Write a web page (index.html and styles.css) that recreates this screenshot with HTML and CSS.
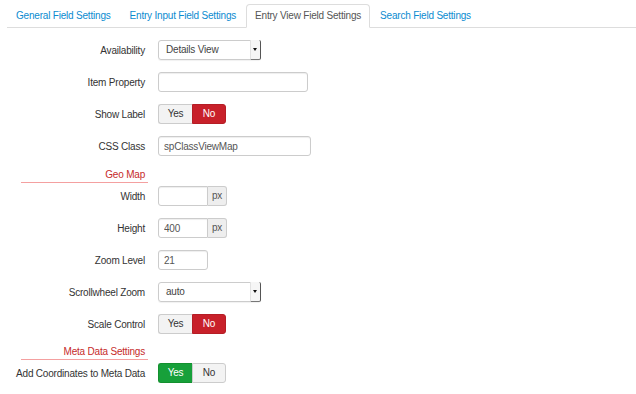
FILE: index.html
```html
<!DOCTYPE html>
<html>
<head>
    <meta charset="utf-8">
    <title>Field Settings</title>
    <link rel="stylesheet" href="styles.css">
</head>
<body>
    <ul class="nav-tabs">
        <li><a href="#">General Field Settings</a></li>
        <li><a href="#">Entry Input Field Settings</a></li>
        <li class="active"><a href="#">Entry View Field Settings</a></li>
        <li><a href="#">Search Field Settings</a></li>
    </ul>

    <form class="settings">
        <div class="row">
            <label class="label">Availability</label>
            <div class="select"><span class="value">Details View</span><span class="arrow"></span></div>
        </div>
        <div class="row">
            <label class="label">Item Property</label>
            <input class="input input-wide" type="text" value="">
        </div>
        <div class="row">
            <label class="label">Show Label</label>
            <div class="btn-group">
                <span class="btn">Yes</span>
                <span class="btn btn-danger">No</span>
            </div>
        </div>
        <div class="row">
            <label class="label">CSS Class</label>
            <input class="input input-css" type="text" value="spClassViewMap">
        </div>

        <div class="section-title geo">Geo Map</div>
        <div class="row">
            <label class="label">Width</label>
            <div class="input-append">
                <input class="input input-small" type="text" value="">
                <span class="add-on">px</span>
            </div>
        </div>
        <div class="row">
            <label class="label">Height</label>
            <div class="input-append">
                <input class="input input-small" type="text" value="400">
                <span class="add-on">px</span>
            </div>
        </div>
        <div class="row">
            <label class="label">Zoom Level</label>
            <input class="input input-small" type="text" value="21">
        </div>
        <div class="row">
            <label class="label">Scrollwheel Zoom</label>
            <div class="select"><span class="value">auto</span><span class="arrow"></span></div>
        </div>
        <div class="row">
            <label class="label">Scale Control</label>
            <div class="btn-group">
                <span class="btn">Yes</span>
                <span class="btn btn-danger">No</span>
            </div>
        </div>

        <div class="section-title meta">Meta Data Settings</div>
        <div class="row">
            <label class="label">Add Coordinates to Meta Data</label>
            <div class="btn-group">
                <span class="btn btn-success">Yes</span>
                <span class="btn">No</span>
            </div>
        </div>
    </form>
</body>
</html>
```

FILE: styles.css
```css
body {
    margin: 0;
    background: #fff;
    font-family: 'Liberation Sans', Arial, sans-serif;
    font-size: 10px;
    letter-spacing: -0.2px;
    color: #333;
}

/* tabs */
.nav-tabs {
    list-style: none;
    margin: 0 0 0 7px;
    padding: 4px 0 0 0;
    display: flex;
    border-bottom: 1px solid #ddd;
}

.nav-tabs li {
    margin: 0 1px -1px 0;
}

.nav-tabs a {
    display: block;
    height: 22px;
    line-height: 22px;
    padding: 0 8px;
    border: 1px solid transparent;
    border-radius: 4px 4px 0 0;
    color: #0a8bd0;
    text-decoration: none;
}

.nav-tabs .active a {
    color: #555;
    background: #fff;
    border-color: #ddd #ddd transparent;
}

/* form rows */
.settings {
    padding-top: 12px;
}

.row {
    display: flex;
    align-items: center;
    gap: 13px;
    height: 20px;
    margin-bottom: 12px;
}

.label {
    width: 145px;
    text-align: right;
    flex-shrink: 0;
}

.input {
    box-sizing: border-box;
    height: 20px;
    margin: 0;
    padding: 0 5px;
    border: 1px solid #ccc;
    border-radius: 3px;
    box-shadow: inset 0 1px 1px rgba(0,0,0,0.07);
    font-family: inherit;
    font-size: 10px;
    letter-spacing: -0.2px;
    color: #555;
    background: #fff;
    outline: none;
}

.input-wide { width: 150px; }
.input-css { width: 153px; }
.input-small { width: 50px; }

.input-append {
    display: flex;
}

.input-append .input {
    border-radius: 3px 0 0 3px;
}

.add-on {
    box-sizing: border-box;
    width: 19px;
    height: 20px;
    line-height: 18px;
    text-align: center;
    background: #eee;
    border: 1px solid #ccc;
    border-left: none;
    border-radius: 0 3px 3px 0;
    color: #555;
}

/* fake select */
.select {
    box-sizing: border-box;
    width: 103px;
    height: 20px;
    display: flex;
    border: 1px solid #ccc;
    border-radius: 3px;
    box-shadow: 0 1px 1px rgba(0,0,0,0.06);
}

.select .value {
    flex: 1;
    padding-left: 7px;
    line-height: 18px;
    color: #444;
}

.select .arrow {
    position: relative;
    width: 9px;
    margin: -1px -1px -1px 0;
    background: #f6f6f6;
    border-left: 1px solid #e2e2e2;
    border-right: 1px solid #555;
    border-bottom: 1px solid #777;
    border-radius: 0 2px 2px 0;
}

.select .arrow::after {
    content: "";
    position: absolute;
    left: 2px;
    top: 8px;
    border-top: 3px solid #111;
    border-left: 2.5px solid transparent;
    border-right: 2.5px solid transparent;
}

/* yes / no toggles */
.btn-group {
    display: flex;
}

.btn {
    box-sizing: border-box;
    width: 34px;
    height: 20px;
    line-height: 18px;
    text-align: center;
    background: #f3f3f3;
    border: 1px solid #ccc;
    color: #333;
}

.btn:first-child {
    border-radius: 3px 0 0 3px;
    border-right: none;
}

.btn:last-child {
    border-radius: 0 3px 3px 0;
}

.btn-danger {
    background: #c8202a;
    border-color: #b51d25;
    color: #fff;
}

.btn-success {
    background: #17a03a;
    border-color: #14902f;
    color: #fff;
}

/* section headings */
.section-title {
    box-sizing: border-box;
    width: 127px;
    margin-left: 21px;
    padding-right: 3px;
    text-align: right;
    color: #c62b2b;
    line-height: 14px;
    border-bottom: 1px solid #f4a0a0;
}

.section-title.geo {
    margin-top: 1px;
    margin-bottom: 3px;
}

.section-title.meta {
    margin-top: -1px;
    margin-bottom: 3px;
}
```
